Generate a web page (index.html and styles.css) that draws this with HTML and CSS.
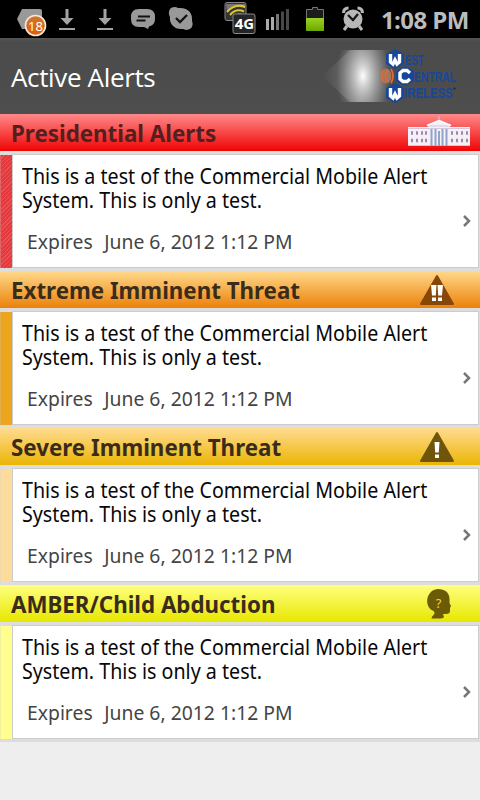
FILE: index.html
```html
<!DOCTYPE html>
<html lang="en">
<head>
<meta charset="utf-8">
<title>Active Alerts</title>
<link rel="stylesheet" href="styles.css">
</head>
<body>
<div class="statusbar">
  <svg class="status-icons" width="374" height="38" viewBox="0 0 374 38">
    <defs>
      <linearGradient id="orange" x1="0" y1="0" x2="0" y2="1"><stop offset="0" stop-color="#d27829"/><stop offset="1" stop-color="#e15b08"/></linearGradient>
      <linearGradient id="green" x1="0" y1="0" x2="0" y2="1"><stop offset="0" stop-color="#9bd322"/><stop offset="1" stop-color="#6ba800"/></linearGradient>
    </defs>
    <path d="M22 9h18q2 0 2 2v16q0 2-2 2H22l-5-10z" fill="#999"/>
    <circle cx="35.500" cy="25.500" r="10" fill="url(#orange)" stroke="#f4e9de" stroke-width="1.600"/>
    <text class="badge" x="35.500" y="30.500" text-anchor="middle">18</text>
    <g fill="#a3a3a3">
      <path d="M65.500 9h3v9h5l-6.500 7-6.500-7h5zM59 28h16v2H59z"/>
      <path d="M103.500 9h3v9h5l-6.500 7-6.500-7h5zM97 28h16v2H97z"/>
    </g>
    <path d="M139 9h8q8 0 8 8v2q0 6-6 7.500l-1 2.500-4-2h-5q-8 0-8-8v-2q0-8 8-8z" fill="#999"/>
    <path d="M138 16.500h12M136.500 20.500h9" stroke="#111" stroke-width="2"/>
    <path d="M171 8q4-2 7 0c10-1 15 5 14 13 2 5-1 9-6 9-1 0-2-1-3-1-8 1-14-5-13-12-2-4-1-7 1-9z" fill="#999"/>
    <path d="M176 18l4 4 7-7" fill="none" stroke="#111" stroke-width="2.300"/>
    <rect x="225" y="2.500" width="21" height="18" rx="2" fill="#333" stroke="#888"/>
    <path d="M226 4h19v4q-10-3-18 4z" fill="#777"/>
    <path d="M227 12q8-9 18-5M230 15q6-7 14-3.500M234 17q4-4 9-1.500" fill="none" stroke="#e0c629" stroke-width="2"/>
    <rect x="233" y="14" width="22" height="19.500" rx="2" fill="#252525" stroke="#888"/>
    <text class="network" x="244.500" y="29" text-anchor="middle">4G</text>
    <path d="M266 19h3v11h-3zM271 17h3v13h-3z" fill="#aaa"/>
    <path d="M276 14h3v16h-3z" fill="#777"/><path d="M281 11.500h3V30h-3zM286 9h3v21h-3z" fill="#484848"/>
    <path d="M312.500 7.500h5v2h6v21h-17v-21h6z" fill="#1c1c1c" stroke="#777"/>
    <rect x="306" y="18" width="18" height="13" rx="1" fill="url(#green)"/>
    <circle cx="353" cy="19" r="9.500" fill="#b8b8b8"/>
    <path d="M343.500 13q0-5 5-5M357.500 8q5 0 5 5M347 26l-3 4M359 26l3 4" fill="none" stroke="#b8b8b8" stroke-width="3"/>
    <path d="M348 15l5 5 5-6" fill="none" stroke="#171717" stroke-width="2.300"/>
  </svg>
  <span class="clock">1:08 PM</span>
</div>
<header class="titlebar">
  <h1>Active Alerts</h1>
  <svg class="brand" width="160" height="76" viewBox="0 0 160 76">
    <defs>
      <radialGradient id="glow" cx="0.500" cy="0.500" r="0.500"><stop offset="0" stop-color="#fff"/><stop offset=".3" stop-color="#ddd" stop-opacity=".75"/><stop offset="1" stop-color="#aaa" stop-opacity="0"/></radialGradient>
      <linearGradient id="side" x1="0" x2="1"><stop offset="0" stop-color="#aaa" stop-opacity="0"/><stop offset=".55" stop-color="#bbb" stop-opacity=".4"/><stop offset="1" stop-color="#bbb" stop-opacity="0"/></linearGradient>
      <clipPath id="beam"><path d="M8 12H72V64H8z"/></clipPath>
      <path id="hex" d="M0-10l9 5V5L0 10-9 5V-5z"/>
    </defs>
    <path d="M2 38L30 12H72V64H30z" fill="url(#side)"/>
    <ellipse cx="43" cy="38" rx="27" ry="48" fill="url(#glow)" clip-path="url(#beam)"/>
    <ellipse cx="66" cy="38" rx="5.500" ry="7.500" fill="#a27562"/>
    <path d="M63.500 32q-4 6 0 12M67.500 32q-4 6 0 12M71 31q4 7 0 14" fill="none" stroke="#dd6b35" stroke-width="1.800"/>
    <g fill="#17479a"><use href="#hex" x="75" y="21"/><use href="#hex" x="85" y="38"/><use href="#hex" x="75" y="55"/></g>
    <g fill="none" stroke="#fff" stroke-width="3.400"><path d="M70.500 16v8l2.500 2 2-4 2 4 2.500-2v-8M70.500 50v8l2.500 2 2-4 2 4 2.500-2v-8M90 35l-3-2.500h-4L80 35v6l3 2.500h4l3-2.500"/></g>
    <g class="brand-text">
      <text x="85" y="27" textLength="19" lengthAdjust="spacingAndGlyphs">EST</text>
      <text x="94" y="44" textLength="42" lengthAdjust="spacingAndGlyphs">ENTRAL</text>
      <text x="84" y="60" textLength="49" lengthAdjust="spacingAndGlyphs">IRELESS</text>
    </g>
    <circle cx="134.500" cy="50.500" r="1" fill="#222"/>
  </svg>
</header>
<main>
  <section class="alert presidential">
    <div class="category"><h2>Presidential Alerts</h2>
      <svg class="house" width="64" height="34" viewBox="0 0 64 34">
        <path d="M1 11h20V9l11-5 11 5v2h20v19H1z" fill="#f3f0f8"/>
        <path d="M32 0v5M1 12.500h62M21 10h22M1 29.500h62" stroke="#d3c6df"/>
        <path d="M20 9.500l12-5 12 5" fill="none" stroke="#fff" stroke-width="1.500"/>
        <path d="M4 17h2m3 0h2m3 0h2m2 0h2m24 0h2m3 0h2m3 0h2m3 0h2M4 24.500h2m3 0h2m3 0h2m2 0h2m24 0h2m3 0h2m3 0h2m3 0h2" stroke="#a584a6" stroke-width="3.500"/>
        <path d="M24.500 13v17M28.500 13v17M35.500 13v17M39.500 13v17M32 15v15" stroke="#90a3c9" stroke-width="2"/>
      </svg></div>
    <div class="row"><i class="stripe"></i><article class="card"><div class="copy"><p class="message">This is a test of the Commercial Mobile Alert<br>System. This is only a test.</p><p class="expiry"><span>Expires</span><time>June 6, 2012 1:12 PM</time></p></div><svg class="arrow" width="10" height="14" viewBox="0 0 10 14"><path d="M2 2l5 5-5 5"/></svg></article></div>
  </section>
  <section class="alert extreme">
    <div class="category"><h2>Extreme Imminent Threat</h2>
      <svg class="sign" width="36" height="32" viewBox="0 0 36 32"><path d="M18 2L34 30H2z" fill="#874706" stroke="#874706" stroke-width="2" stroke-linejoin="round"/><path d="M12 11h5.500l-.7 10.500H13zM18.500 11H24l-1 10.500h-3.800zM13 23.500h4v3.500h-4zM19 23.500h4v3.500h-4z" fill="#fff"/></svg></div>
    <div class="row"><i class="stripe"></i><article class="card"><div class="copy"><p class="message">This is a test of the Commercial Mobile Alert<br>System. This is only a test.</p><p class="expiry"><span>Expires</span><time>June 6, 2012 1:12 PM</time></p></div><svg class="arrow" width="10" height="14" viewBox="0 0 10 14"><path d="M2 2l5 5-5 5"/></svg></article></div>
  </section>
  <section class="alert severe">
    <div class="category"><h2>Severe Imminent Threat</h2>
      <svg class="sign" width="36" height="32" viewBox="0 0 36 32"><path d="M18 2L34 30H2z" fill="#70540a" stroke="#70540a" stroke-width="2" stroke-linejoin="round"/><path d="M15.500 11h5l-.7 10.500h-3.600zM16 23.500h4V27h-4z" fill="#fff"/></svg></div>
    <div class="row"><i class="stripe"></i><article class="card"><div class="copy"><p class="message">This is a test of the Commercial Mobile Alert<br>System. This is only a test.</p><p class="expiry"><span>Expires</span><time>June 6, 2012 1:12 PM</time></p></div><svg class="arrow" width="10" height="14" viewBox="0 0 10 14"><path d="M2 2l5 5-5 5"/></svg></article></div>
  </section>
  <section class="alert amber">
    <div class="category"><h2>AMBER/Child Abduction</h2>
      <svg class="child" width="26" height="32" viewBox="0 0 26 32"><path d="M12 1C19 1 24 5 23.500 12v3l1.500 3-1 2v3q0 3-4 3h-3l1 3q-1 2-6 1.500H5.500q0-2 2-3.500 2-2 0-4C-2 20-1 2 12 1z" fill="#6b5a08"/><text class="question" x="12.500" y="20" text-anchor="middle">?</text></svg></div>
    <div class="row"><i class="stripe"></i><article class="card"><div class="copy"><p class="message">This is a test of the Commercial Mobile Alert<br>System. This is only a test.</p><p class="expiry"><span>Expires</span><time>June 6, 2012 1:12 PM</time></p></div><svg class="arrow" width="10" height="14" viewBox="0 0 10 14"><path d="M2 2l5 5-5 5"/></svg></article></div>
  </section>
</main>
</body>
</html>
```
FILE: styles.css
```css
* { box-sizing: border-box; }
body { margin: 0; width: 480px; height: 800px; overflow: hidden; background: #eee; font-family: "Noto Sans", "Open Sans", sans-serif; }
h1, h2, p { margin: 0; }
svg { display: block; flex: none; }
.statusbar { display: flex; height: 38px; background: #000; }
.clock { margin-left: 7px; color: #bcbcbc; font-family: "Open Sans", sans-serif; font-size: 24px; font-weight: 700; line-height: 39px; letter-spacing: -.6px; white-space: nowrap; }
.badge { fill: #fff; font-size: 13px; }
.network { fill: #fff; font-family: "Open Sans", sans-serif; font-size: 15px; font-weight: 700; }
.titlebar { display: flex; justify-content: space-between; height: 76px; padding-left: 11px; background: linear-gradient(#555 0, #4b4b4b 4px, #4e4e4e); }
.titlebar h1 { color: #fff; font-family: "Open Sans", sans-serif; font-size: 26px; font-weight: 400; line-height: 78px; letter-spacing: -.35px; white-space: nowrap; }
.brand-text { fill: #17479a; font-family: "Liberation Sans", sans-serif; font-size: 15px; font-weight: 700; }
.alert { height: 157px; background: #ddd; }
.category { display: flex; justify-content: space-between; align-items: center; height: 37px; padding-left: 11px; background: linear-gradient(var(--top), var(--bottom)); }
.category h2 { height: 37px; color: #3a2c1b; font-size: 23px; font-weight: 700; line-height: 39px; white-space: nowrap; transform: scaleX(.971); transform-origin: left; }
.presidential { --top: #ff8a8a; --bottom: #f00404; --stripe: #e63b3e; }
.presidential h2 { color: #51201f; }
.extreme { --top: #ffd98c; --bottom: #ec810a; --stripe: #eca51e; }
.severe { --top: #ffdb91; --bottom: #ebb504; --stripe: #fbdc9c; }
.amber { --top: #ffff80; --bottom: #e7e700; --stripe: #ffff91; }
.house { margin-right: 9px; }
.sign { margin-right: 25px; }
.child { margin-right: 28px; }
.question { fill: #e5d72e; font-size: 13px; }
.row { display: flex; height: 120px; padding: 3px 1px 3px 0; }
.stripe { width: 12px; height: 113px; margin-top: 1px; background: var(--stripe); border-left: 1px solid #ccc4; }
.presidential .stripe { background: repeating-linear-gradient(135deg, #e4393d 0 2px, #ea5356 2px 3px); }
.card { display: flex; flex: 1; justify-content: space-between; align-items: center; height: 114px; padding: 0 6px 0 9px; background: #fff; border: 1px solid #ccc; }
.copy { align-self: flex-start; width: 430px; padding-top: 8px; }
.message { width: 480px; color: #080808; font-size: 22px; line-height: 24px; white-space: nowrap; transform: scaleX(.894); transform-origin: left; }
.expiry { display: flex; gap: 12px; margin: 18px 0 0 5px; color: #444; font-size: 20px; line-height: 26px; white-space: nowrap; transform: scaleX(.967); transform-origin: left; }
.arrow { margin-top: 20px; }
.arrow path { fill: none; stroke: #777; stroke-width: 2.5; }
```
